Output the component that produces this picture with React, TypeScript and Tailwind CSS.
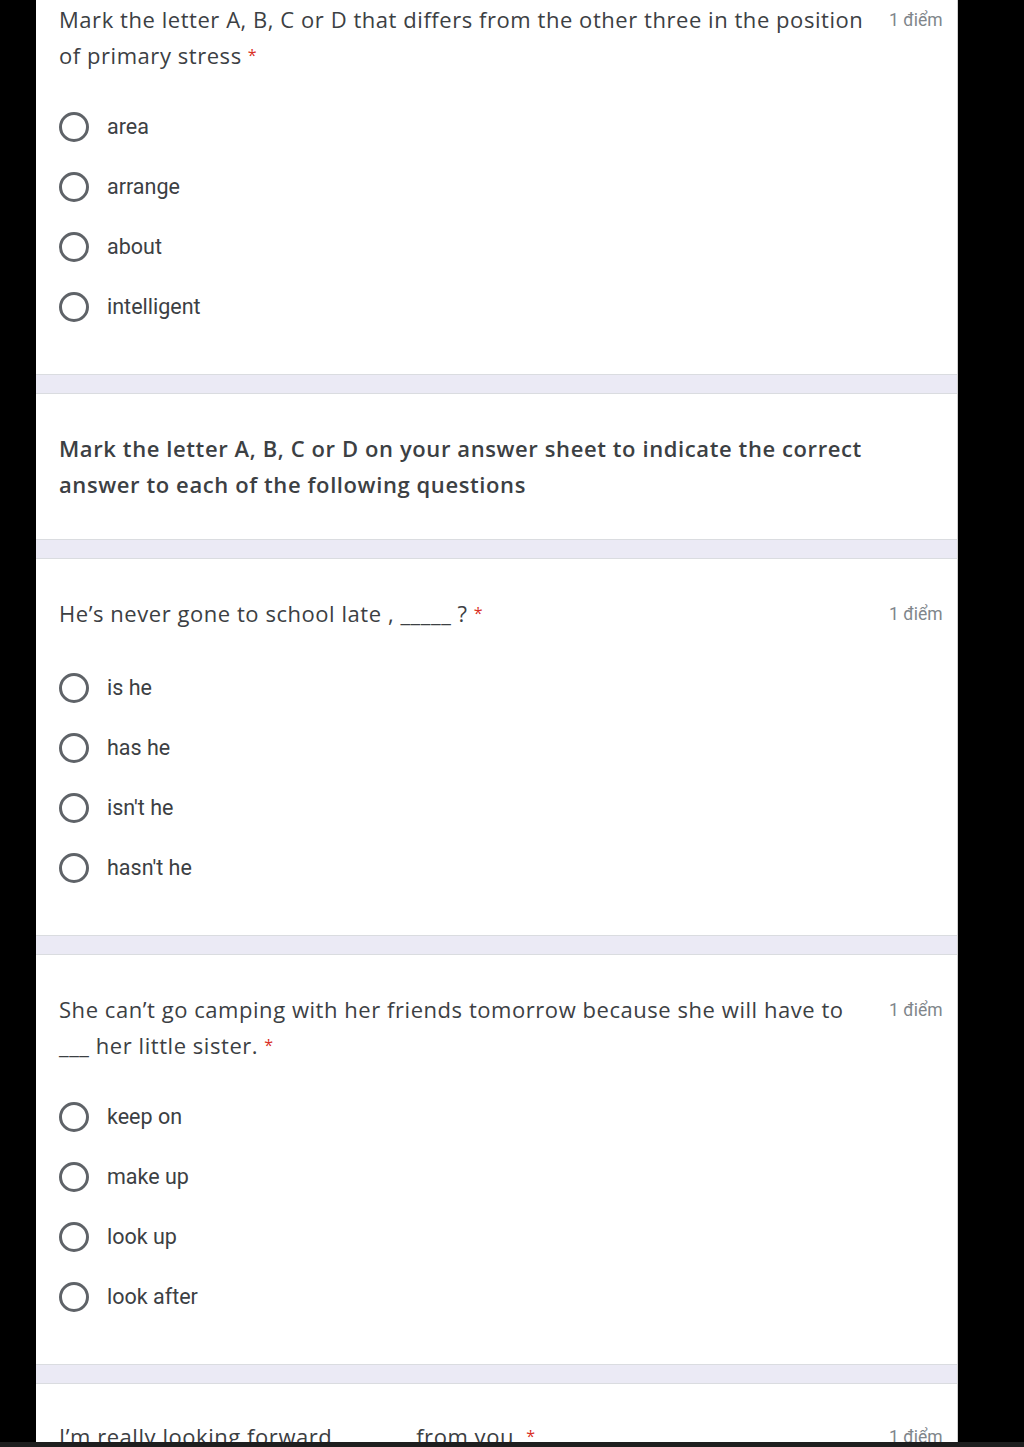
const qFont = { fontFamily: '"Open Sans", "Liberation Sans", sans-serif' };

function Radio({ label }: { label: string }) {
  return (
    <div className="flex h-[60px] items-center gap-[18px]">
      <span className="h-[30px] w-[30px] shrink-0 rounded-full border-[3px] border-[#5f6368]" />
      <span className="font-['Roboto',sans-serif] text-[21.5px] text-[#3c4043]">{label}</span>
    </div>
  );
}

function Points() {
  return (
    <span className="mt-[2px] w-[56px] shrink-0 font-['Roboto',sans-serif] text-[17.5px] leading-[34px] text-[#80868b]">
      1 điểm
    </span>
  );
}

function Star() {
  return <span className="ml-[6px] text-[16px] text-[#d93025] align-top">*</span>;
}

function Separator() {
  return <div className="h-[20px] shrink-0 border-y border-[#dadce0] bg-[#ebeaf5]" />;
}

function Question({
  text,
  options,
  className,
  listClass = 'mt-[24px]',
}: {
  text: React.ReactNode;
  options: string[];
  className: string;
  listClass?: string;
}) {
  return (
    <div className={`shrink-0 pl-[23px] pr-[12px] pb-[37px] ${className}`}>
      <div className="flex items-start gap-[10px]">
        <div
          style={qFont}
          className="flex-1 text-[22px] leading-[36px] tracking-[0.55px] text-[#3c4043]"
        >
          {text}
        </div>
        <Points />
      </div>
      <div className={`flex flex-col ${listClass}`}>
        {options.map((o) => (
          <Radio key={o} label={o} />
        ))}
      </div>
    </div>
  );
}

export default function App() {
  return (
    <div className="flex h-[1447px] flex-col overflow-hidden bg-black">
      <div className="ml-[36px] flex w-[922px] flex-1 flex-col overflow-hidden border-r border-[#d0d0d0] bg-white">
        <Question
          className="pt-px"
          text={
            <>
              Mark the letter A, B, C or D that differs from the other three in the position of primary stress
              <Star />
            </>
          }
          options={['area', 'arrange', 'about', 'intelligent']}
        />
        <Separator />
        <div className="shrink-0 pl-[23px] pr-[60px] pt-[36px] pb-[37px]">
          <p style={qFont} className="text-[22px] font-semibold leading-[36px] tracking-[0.6px] text-[#3c4043]">
            Mark the letter A, B, C or D on your answer sheet to indicate the correct answer to each of the
            following questions
          </p>
        </div>
        <Separator />
        <Question
          className="pt-[36px]"
          listClass="mt-[27px]"
          text={
            <>
              He’s never gone to school late , _____ ?
              <Star />
            </>
          }
          options={['is he', 'has he', "isn't he", "hasn't he"]}
        />
        <Separator />
        <Question
          className="pt-[36px]"
          text={
            <>
              She can’t go camping with her friends tomorrow because she will have to ___ her little sister.
              <Star />
            </>
          }
          options={['keep on', 'make up', 'look up', 'look after']}
        />
        <Separator />
        <div className="flex flex-1 items-start gap-[10px] overflow-hidden pl-[23px] pr-[12px] pt-[34px]">
          <div style={qFont} className="flex-1 text-[22px] leading-[36px] tracking-[0.55px] text-[#3c4043]">
            I’m really looking forward _______ from you.
            <Star />
          </div>
          <Points />
        </div>
      </div>
      <div className="h-[5px] shrink-0 bg-[#1e1e1e]" />
    </div>
  );
}
